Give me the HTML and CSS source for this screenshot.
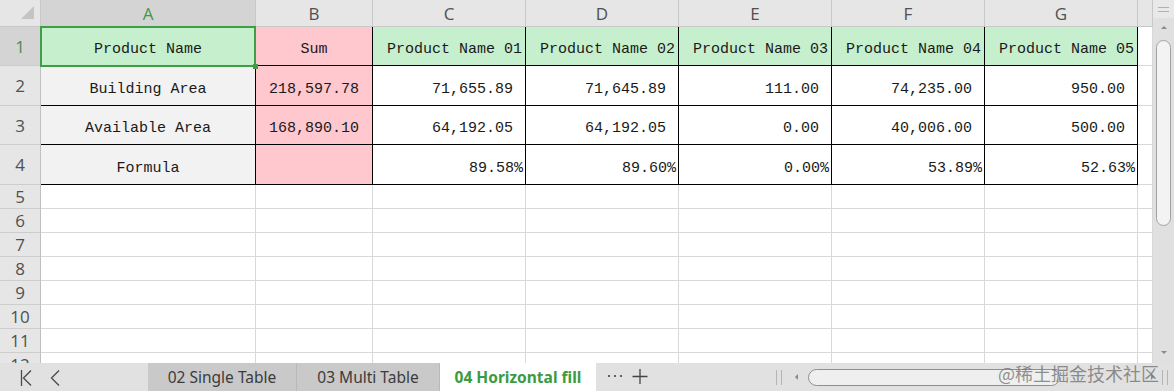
FILE: index.html
```html
<!DOCTYPE HTML>
<html>
<head>
<meta charset="utf-8">
<title>04 Horizontal fill</title>
<link rel="stylesheet" href="styles.css">
</head>
<body>
<div class="book">
  <div class="sheet-area">
    <div class="grid">
      <div class="hd corner"></div>
      <div class="hd on">A</div><div class="hd">B</div><div class="hd">C</div><div class="hd">D</div>
      <div class="hd">E</div><div class="hd">F</div><div class="hd">G</div><div class="hd"></div>

      <div class="rh on">1</div>
      <div class="blk green ctr">Product Name</div>
      <div class="blk pink ctr">Sum</div>
      <div class="blk green head">Product Name 01</div>
      <div class="blk green head">Product Name 02</div>
      <div class="blk green head">Product Name 03</div>
      <div class="blk green head">Product Name 04</div>
      <div class="blk green head">Product Name 05</div>
      <div></div>

      <div class="rh">2</div>
      <div class="blk gray ctr">Building Area</div>
      <div class="blk pink ctr">218,597.78</div>
      <div class="blk num">71,655.89</div>
      <div class="blk num">71,645.89</div>
      <div class="blk num">111.00</div>
      <div class="blk num">74,235.00</div>
      <div class="blk num">950.00</div>
      <div></div>

      <div class="rh">3</div>
      <div class="blk gray ctr">Available Area</div>
      <div class="blk pink ctr">168,890.10</div>
      <div class="blk num">64,192.05</div>
      <div class="blk num">64,192.05</div>
      <div class="blk num">0.00</div>
      <div class="blk num">40,006.00</div>
      <div class="blk num">500.00</div>
      <div></div>

      <div class="rh">4</div>
      <div class="blk gray ctr">Formula</div>
      <div class="blk pink"></div>
      <div class="blk pct">89.58%</div>
      <div class="blk pct">89.60%</div>
      <div class="blk pct">0.00%</div>
      <div class="blk pct">53.89%</div>
      <div class="blk pct">52.63%</div>
      <div></div>

      <div class="rh">5</div><div></div><div></div><div></div><div></div><div></div><div></div><div></div><div></div>
      <div class="rh">6</div><div></div><div></div><div></div><div></div><div></div><div></div><div></div><div></div>
      <div class="rh">7</div><div></div><div></div><div></div><div></div><div></div><div></div><div></div><div></div>
      <div class="rh">8</div><div></div><div></div><div></div><div></div><div></div><div></div><div></div><div></div>
      <div class="rh">9</div><div></div><div></div><div></div><div></div><div></div><div></div><div></div><div></div>
      <div class="rh">10</div><div></div><div></div><div></div><div></div><div></div><div></div><div></div><div></div>
      <div class="rh">11</div><div></div><div></div><div></div><div></div><div></div><div></div><div></div><div></div>
      <div class="rh">12</div><div></div><div></div><div></div><div></div><div></div><div></div><div></div><div></div>

      <span class="selbox"></span>
      <span class="handle"></span>
    </div>

    <div class="vscroll">
      <div class="grip"><i></i></div>
      <div class="arr-up"></div>
      <div class="thumb"></div>
      <div class="fill"></div>
      <div class="arr-dn"></div>
    </div>
  </div>

  <div class="tabbar">
    <div class="nav">
      <svg width="60" height="28" viewBox="0 0 60 28">
        <path d="M21.5 7v16M31 7.5l-7.5 7.5 7.5 7.5" fill="none" stroke="#4a4a4a" stroke-width="1.3"/>
        <path d="M59 7.5l-7.5 7.5 7.5 7.5" fill="none" stroke="#4a4a4a" stroke-width="1.3"/>
      </svg>
    </div>
    <div class="tab">02 Single Table</div>
    <div class="tab">03 Multi Table</div>
    <div class="tab on">04 Horizontal fill</div>
    <div class="tools">
      <svg width="60" height="28" viewBox="0 0 60 28">
        <circle cx="13" cy="13" r="1.1" fill="#444"/>
        <circle cx="19" cy="13" r="1.1" fill="#444"/>
        <circle cx="25" cy="13" r="1.1" fill="#444"/>
        <path d="M44 6v15M36.5 13.5h15" stroke="#444" stroke-width="1.3"/>
      </svg>
    </div>
    <div class="space"></div>
    <div class="hscroll">
      <span class="bars"></span>
      <span class="arr-l"></span>
      <span class="hthumb"></span>
      <span class="hfill"></span>
      <span class="arr-r"></span>
      <span class="bars"></span>
    </div>
    <div class="mark">@稀土掘金技术社区</div>
  </div>
</div>
</body>
</html>
```

FILE: styles.css
```css
body {margin:0; background:#fff; font-family:"Liberation Mono", monospace;}
.book {width:1174px; height:391px; display:flex; flex-direction:column; overflow:hidden;}

.sheet-area {display:flex; height:363px; overflow:hidden; flex:none;}
.grid {position:relative; flex:none; width:1153px; display:grid;
  grid-template-columns:41px 215px 117px repeat(5,153px) 15px;
  grid-template-rows:27px 39px 40px 39px 40px repeat(8,24px);}
.grid > div {box-sizing:border-box; border-right:1px solid #d8d8d8; border-bottom:1px solid #d8d8d8;
  display:flex; align-items:center; padding-top:7px; font-size:15px; color:#1a1a1a; white-space:nowrap; overflow:hidden;}

.grid > .hd {background:#e6e6e6; border-color:#c8c8c8; justify-content:center; padding-top:0;
  font-family:"Open Sans", sans-serif; font-size:17px; color:#505050;}
.grid > .rh {background:#e6e6e6; border-color:#cdcdcd; border-right-color:#c0c0c0; justify-content:center; padding-top:0;
  font-family:"Open Sans", sans-serif; font-size:17px; color:#505050;}
.grid > .on {background:#d4d4d4; color:#3d9a41;}
.grid > .rh.on {color:#4f8a52;}
.corner {position:relative;}
.corner::after {content:""; position:absolute; right:6px; bottom:7px; width:13px; height:13px; background:#c4c4c4;
  clip-path:polygon(100% 0, 100% 100%, 0 100%);}

.grid > .blk {border-color:#000;}
.green {background:#c6efce;}
.pink {background:#ffc7ce;}
.gray {background:#f2f2f2;}
.ctr {justify-content:center;}
.head {justify-content:flex-end; padding-right:3px;}
.num {justify-content:flex-end; padding-right:12px;}
.pct {justify-content:flex-end; padding-right:2px;}

.selbox {position:absolute; left:40px; top:26px; width:216px; height:41px; box-sizing:border-box; border:2px solid #3f9d44;}
.handle {position:absolute; left:253px; top:64px; width:5px; height:5px; background:#3f9d44;}

.vscroll {flex:1; background:#e0e0e0; display:flex; flex-direction:column; align-items:center;}
.grip {width:100%; height:18px; background:#e9e9e9; display:flex; justify-content:center;}
.grip i {width:11px; height:3px; margin-top:7px; border-top:1px solid #b0b0b0; border-bottom:1px solid #b0b0b0;}
.arr-up {margin-top:8px; border-left:3px solid transparent; border-right:3px solid transparent; border-bottom:3px solid #8a8a8a;}
.thumb {margin-top:11px; width:15px; height:186px; box-sizing:border-box; border:1px solid #a3a3a3; border-radius:8px; background:#f3f3f3;}
.fill {flex:1;}
.arr-dn {margin-bottom:9px; border-left:3px solid transparent; border-right:3px solid transparent; border-top:3px solid #8a8a8a;}

.tabbar {position:relative; flex:1; display:flex; background:#e1e1e1; font-family:"Noto Sans", sans-serif; font-size:15.5px; color:#3c3c3c;}
.nav {width:148px; display:flex; align-items:center;}
.tab {display:flex; align-items:center; justify-content:center; box-sizing:border-box; background:#c9c9c9; border-right:1px solid #b9b9b9;}
.tab:nth-child(2) {width:149px;}
.tab:nth-child(3) {width:143px;}
.tab.on {width:156px; background:#fff; color:#3c9b40; font-weight:bold; border-right:none;}
.tools {display:flex; align-items:center;}
.space {flex:1;}
.hscroll {width:404px; display:flex; align-items:center;}
.bars {width:4px; height:15px; margin:0 6px; border-left:1px solid #b4b4b4; border-right:1px solid #b4b4b4;}
.arr-l {margin-left:7px; border-top:3px solid transparent; border-bottom:3px solid transparent; border-right:3px solid #8a8a8a;}
.hthumb {margin-left:10px; width:252px; height:17px; box-sizing:border-box; border:1px solid #8f8f8f; border-radius:9px; background:#efefef;}
.hfill {flex:1;}
.arr-r {border-top:3px solid transparent; border-bottom:3px solid transparent; border-left:3px solid #8a8a8a; margin-right:2px;}
.mark {position:absolute; right:15px; top:-3px; font-family:"Noto Sans CJK SC", sans-serif; font-size:18px; color:rgba(110,110,110,0.75);}
```
